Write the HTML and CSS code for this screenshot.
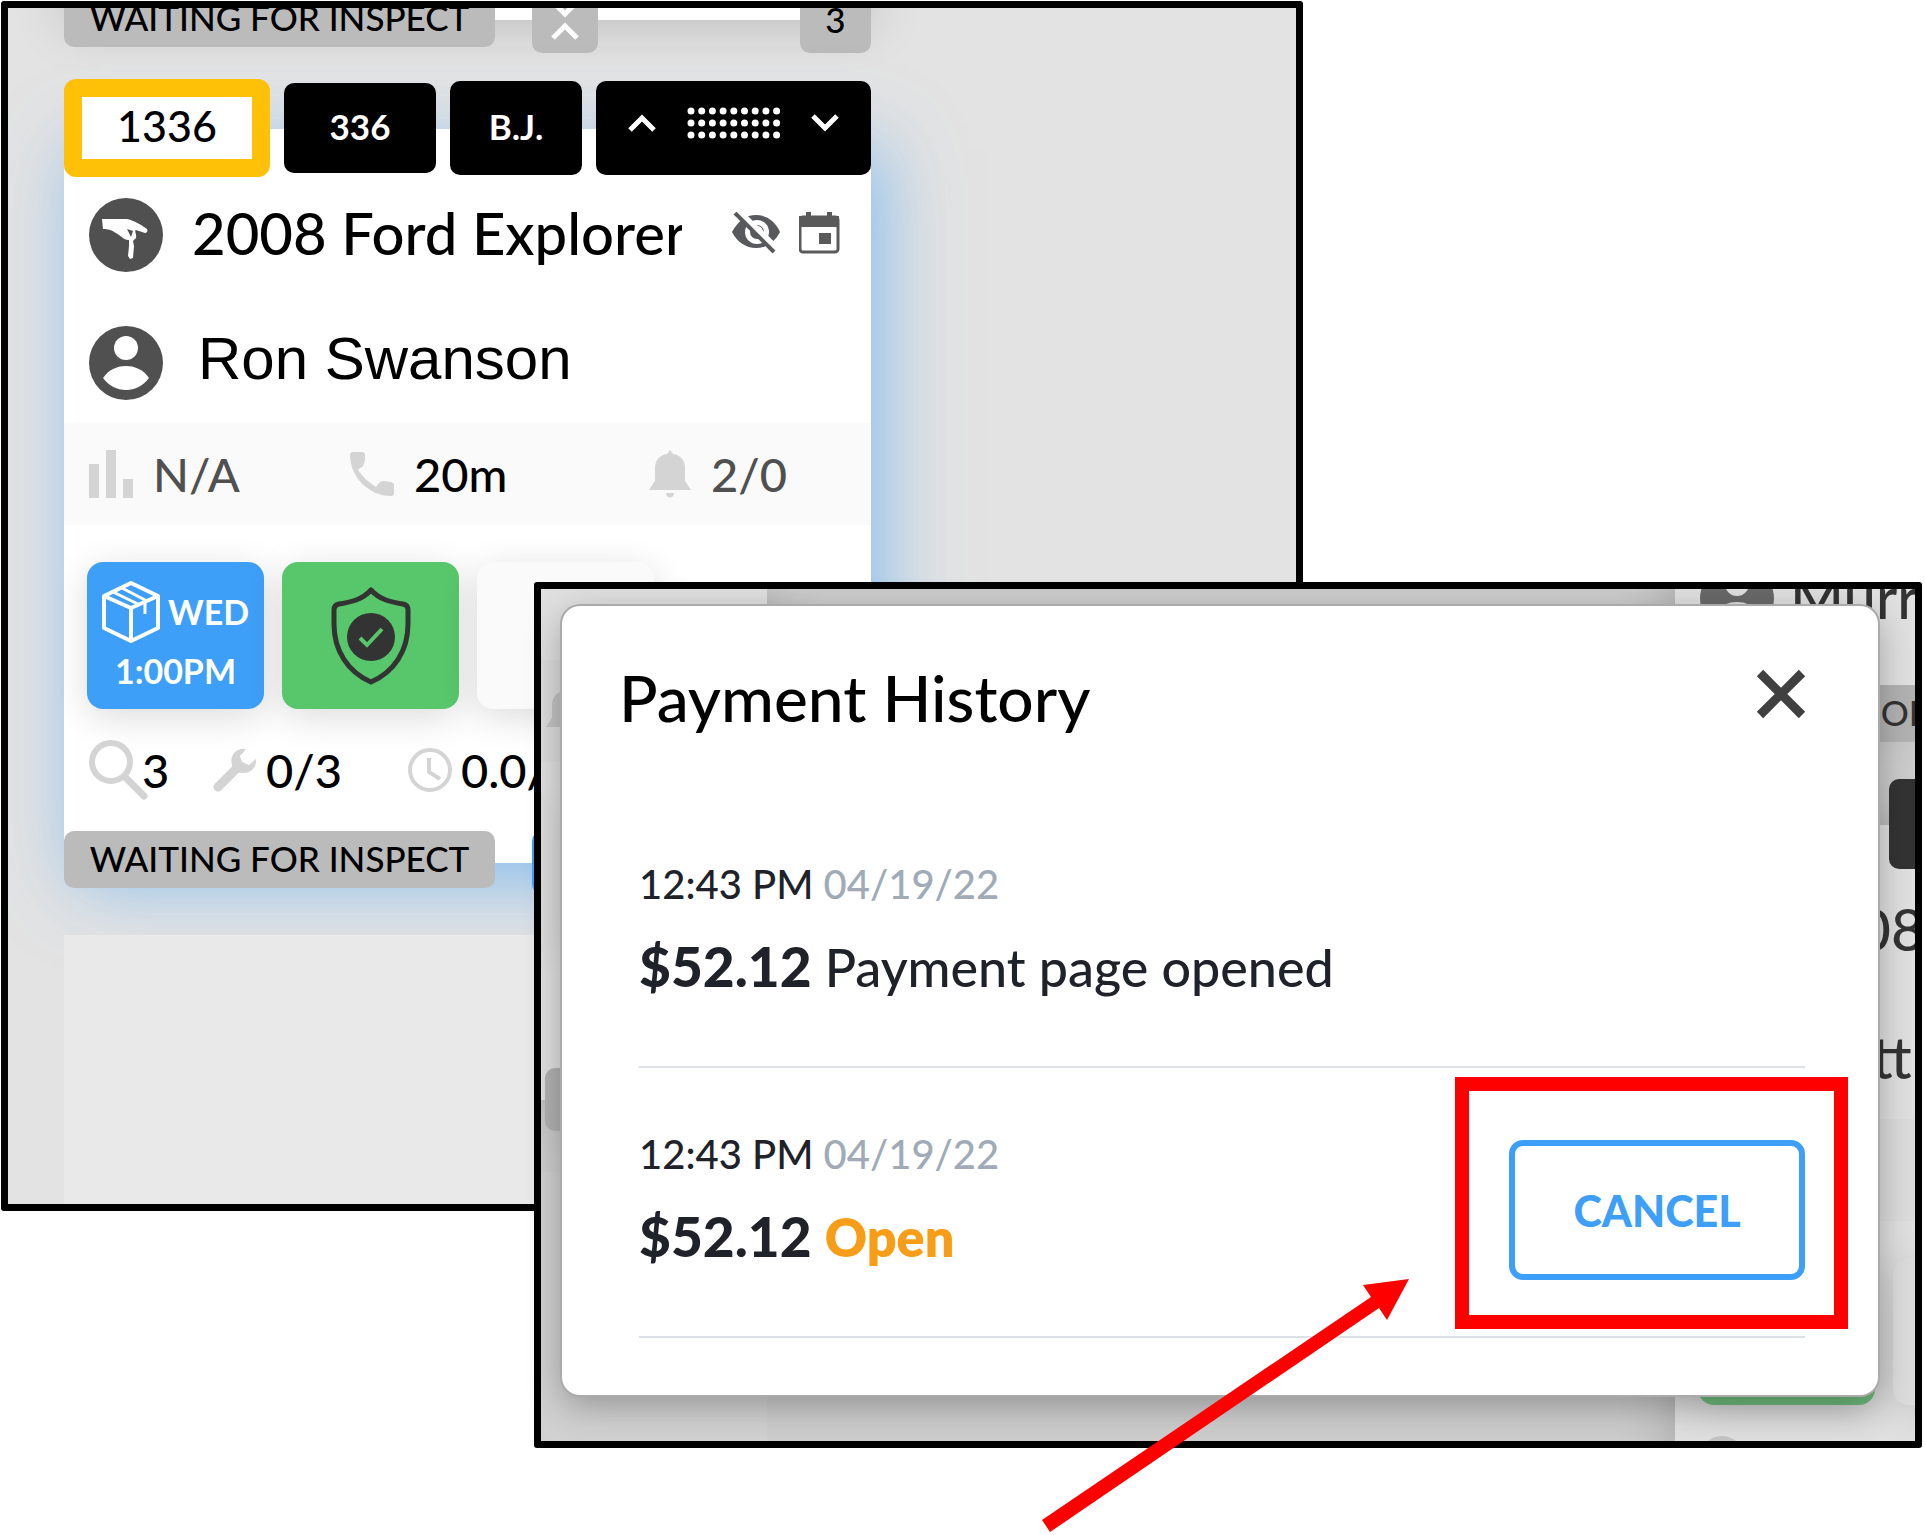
FILE: index.html
```html
<!DOCTYPE html>
<html lang="en">
<head>
    <meta charset="UTF-8">
    <meta name="viewport" content="width=device-width, initial-scale=1.0">
    <title>Payment History</title>
    <link rel="stylesheet" href="styles.css">
</head>
<body>
    <!-- shared icons -->
    <svg class="sprite" aria-hidden="true">
        <symbol id="i-user" viewBox="0 0 74 74">
            <circle cx="37" cy="37" r="37" fill="#505050"/>
            <circle cx="37" cy="22" r="12" fill="#fff"/>
            <path d="M14 52C20 43 29 40 37 40s17 3 23 12c-6 8-14 12-23 12s-17-4-23-12z" fill="#fff"/>
        </symbol>
        <symbol id="i-keys" viewBox="0 0 74 74">
            <circle cx="37" cy="37" r="37" fill="#505050"/>
            <path d="M13 21h25c8 2 13 5 20 10 1 2 0 4-2 4l-9-3c-2 0 1 6 0 8l-3 3 1 5-1 12-3 1-2-3 1-10v-6c-4 0-6-2-10-5-6-4-9-6-16-6z" fill="#fff"/>
            <path d="M38 31l4 8 2-6z" fill="#505050"/>
        </symbol>
        <symbol id="i-bell" viewBox="0 0 42 48">
            <path d="M21 0l3 4c8 1 12 7 12 14v13l6 9H0l6-9V18C6 11 10 5 18 4z" fill="#d4d4d4"/>
            <path d="M17 43h8c0 6-8 6-8 0z" fill="#d4d4d4"/>
        </symbol>
        <symbol id="i-search" viewBox="0 0 60 60">
            <circle cx="22" cy="22" r="19" fill="none" stroke="#d4d4d4" stroke-width="6"/>
            <path d="M36 37l19 19" stroke="#d4d4d4" stroke-width="7" stroke-linecap="round"/>
        </symbol>
        <symbol id="i-up" viewBox="0 0 28 18">
            <path d="M2 16L14 4l12 12" fill="none" stroke="#fff" stroke-width="5"/>
        </symbol>
        <symbol id="i-down" viewBox="0 0 28 18">
            <path d="M2 2l12 12L26 2" fill="none" stroke="#fff" stroke-width="5"/>
        </symbol>
    </svg>

    <main class="canvas">
        <section class="window board-window">
            <div class="column">
                <article class="card card-prev">
                    <div class="card-foot">
                        <span class="tag">WAITING FOR INSPECT</span>
                        <button class="chip-foot toggle" aria-label="Collapse">
                            <svg width="28" height="18"><use href="#i-down"/></svg>
                            <svg width="28" height="18"><use href="#i-up"/></svg>
                        </button>
                        <span class="chip-foot count">3</span>
                    </div>
                </article>

                <article class="card card-active">
                    <div class="card-head">
                        <span class="chip chip-order">1336</span>
                        <span class="chip chip-hat">336</span>
                        <span class="chip chip-advisor">B.J.</span>
                        <div class="chip chip-move">
                            <button class="move" aria-label="Move up"><svg width="28" height="18"><use href="#i-up"/></svg></button>
                            <svg width="94" height="32" viewBox="0 0 94 32">
                                <g fill="none" stroke="#fff" stroke-width="7" stroke-linecap="round" stroke-dasharray="0 10.7">
                                    <path d="M4 4h87"/><path d="M4 16h87"/><path d="M4 28h87"/>
                                </g>
                            </svg>
                            <button class="move" aria-label="Move down"><svg width="28" height="18"><use href="#i-down"/></svg></button>
                        </div>
                    </div>
                    <div class="line">
                        <svg class="avatar"><use href="#i-keys"/></svg>
                        <span class="vehicle">2008 Ford Explorer</span>
                        <span class="line-icons">
                            <svg width="50" height="42" viewBox="0 0 50 42">
                                <path d="M1 20C7 9 15 3 25 3s19 6 24 17c-5 10-14 16-24 16S6 30 1 20z" fill="#58595d"/>
                                <circle cx="26" cy="20" r="12" fill="#fff"/>
                                <circle cx="26" cy="20" r="7" fill="#58595d"/>
                                <path d="M25 14a6 6 0 0 1 7 6z" fill="#fff"/>
                                <path d="M7 0l40 39" stroke="#fff" stroke-width="8"/>
                                <path d="M4 1l39 39" stroke="#58595d" stroke-width="4"/>
                            </svg>
                            <svg width="41" height="42" viewBox="0 0 41 42">
                                <rect x="1" y="5" width="38" height="35" rx="3" fill="none" stroke="#5a5a5a" stroke-width="3"/>
                                <path d="M0 4h40v11H0zM7 0h5v6H7zM28 0h5v6h-5zM20 21h12v11H20z" fill="#5a5a5a"/>
                            </svg>
                        </span>
                    </div>
                    <div class="line line-customer">
                        <svg class="avatar"><use href="#i-user"/></svg>
                        <span class="customer">Ron Swanson</span>
                    </div>
                    <div class="stats">
                        <span class="stat muted">
                            <svg width="44" height="48" viewBox="0 0 44 48"><path d="M0 14h10v34H0zM17 0h10v48H17zM34 29h10v19H34z" fill="#d4d4d4"/></svg>
                            N/A
                        </span>
                        <span class="stat">
                            <svg width="44" height="44" viewBox="0 0 44 44"><path d="M3 0h9q3 0 3 3c0 4 0 7-1 9q-1 3-4 4l-2 2c4 6 10 12 18 17l3-4q2-2 5-2l7 1q3 1 3 3v8q0 3-3 3C19 44 0 25 0 3q0-3 3-3z" fill="#d4d4d4"/></svg>
                            20m
                        </span>
                        <span class="stat muted">
                            <svg width="42" height="48"><use href="#i-bell"/></svg>
                            2/0
                        </span>
                    </div>
                    <div class="tiles">
                        <div class="tile tile-blue">
                            <span class="tile-row">
                                <svg width="58" height="62" viewBox="0 0 58 62" fill="none" stroke="#fff" stroke-width="4" stroke-linejoin="round">
                                    <path d="M29 2l27 13v32L29 60 2 47V15zM2 15l27 12 27-12M29 27v33"/>
                                    <path d="M11 11l27 13M20 7l23 12v14" stroke-width="3"/>
                                </svg>
                                WED
                            </span>
                            <span>1:00PM</span>
                        </div>
                        <div class="tile tile-green">
                            <svg width="82" height="98" viewBox="0 0 82 98">
                                <path d="M41 3c9 10 20 12 32 14q5 1 5 6v14c0 27-14 48-37 58C18 85 4 64 4 37V23q0-5 5-6c12-2 23-4 32-14z" fill="none" stroke="#333" stroke-width="5" stroke-linejoin="round"/>
                                <circle cx="41" cy="50" r="24" fill="#333"/>
                                <path d="M30 51l7 7 15-16" fill="none" stroke="#58c66a" stroke-width="4"/>
                            </svg>
                        </div>
                        <div class="tile"></div>
                    </div>
                    <div class="metrics">
                        <span class="metric metric-search"><svg width="60" height="60"><use href="#i-search"/></svg>3</span>
                        <span class="metric metric-repair">
                            <svg width="44" height="44" viewBox="0 0 44 44">
                                <path d="M5 39L24 20" stroke="#d4d4d4" stroke-width="9" stroke-linecap="round"/>
                                <path d="M33 1c-9-2-17 6-14 16 1 5 5 8 10 8 8 1 15-5 14-14l-7 6-7-3-2-6z" fill="#d4d4d4"/>
                            </svg>
                            0/3
                        </span>
                        <span class="metric metric-time">
                            <svg width="44" height="46" viewBox="0 0 44 46" fill="none" stroke="#d4d4d4" stroke-width="4">
                                <circle cx="22" cy="23" r="20"/><path d="M21 11v14l11 7"/>
                            </svg>
                            0.0/
                        </span>
                    </div>
                    <div class="card-foot">
                        <span class="tag">WAITING FOR INSPECT</span>
                        <span class="chip-foot toggle toggle-blue"></span>
                    </div>
                </article>
                <div class="slot"></div>
            </div>
        </section>

        <section class="window modal-window">
            <!-- dimmed board behind the dialog -->
            <div class="backdrop" aria-hidden="true">
                <div class="column column-left">
                    <article class="card">
                        <div class="stats"><svg width="42" height="48"><use href="#i-bell"/></svg></div>
                        <div class="tiles"><div class="tile"></div></div>
                        <div class="card-foot"><span class="chip-foot"></span></div>
                    </article>
                    <div class="slot"></div>
                </div>
                <div class="column column-right">
                    <article class="card card-murray">
                        <div class="line">
                            <svg class="avatar"><use href="#i-user"/></svg>
                            <span class="vehicle">Murray</span>
                        </div>
                        <div class="card-foot"><span class="tag">WAITING FOR INSPECT</span></div>
                    </article>
                    <article class="card">
                        <div class="card-head"><span class="chip chip-wide"></span><span class="chip chip-hat"></span></div>
                        <div class="line">
                            <svg class="avatar"><use href="#i-keys"/></svg>
                            <span class="vehicle">2008</span>
                        </div>
                        <div class="line line-customer">
                            <svg class="avatar"><use href="#i-user"/></svg>
                            <span class="vehicle">Matthew</span>
                        </div>
                        <div class="stats"></div>
                        <div class="tiles">
                            <div class="tile tile-green"></div>
                            <div class="tile"></div>
                        </div>
                        <div class="metrics"><svg width="60" height="60"><use href="#i-search"/></svg></div>
                    </article>
                </div>
            </div>

            <div class="modal" role="dialog" aria-labelledby="modal-title">
                <header class="modal-head">
                    <h1 id="modal-title">Payment History</h1>
                    <button class="close" aria-label="Close">
                        <svg width="50" height="50" viewBox="0 0 50 50"><path d="M4 4l42 42M46 4L4 46" stroke="#404040" stroke-width="9"/></svg>
                    </button>
                </header>
                <ul class="payments">
                    <li class="payment">
                        <div class="payment-info">
                            <p class="when">12:43 PM <span class="date">04/19/22</span></p>
                            <p class="what"><strong>$52.12</strong> Payment page opened</p>
                        </div>
                    </li>
                    <li class="payment">
                        <div class="payment-info">
                            <p class="when">12:43 PM <span class="date">04/19/22</span></p>
                            <p class="what"><strong>$52.12</strong> <span class="open">Open</span></p>
                        </div>
                        <div class="highlight"><button class="cancel">CANCEL</button></div>
                    </li>
                </ul>
            </div>

            <svg class="arrow" width="368" height="254" viewBox="0 0 368 254" aria-hidden="true">
                <path d="M0 241L329 18 321 6 367 0 345 41 337 29 8 253z" fill="#f00"/>
            </svg>
        </section>
    </main>
</body>
</html>
```
FILE: styles.css
```css
* {
    box-sizing: border-box;
}
body {
    margin: 0;
    background: #fff;
    color: #000;
    font-family: Lato, "Open Sans", sans-serif;
    font-weight: 500;
}
h1, p, ul {
    margin: 0;
    padding: 0;
}
button {
    font: inherit;
    padding: 0;
    border: none;
    background: none;
    cursor: pointer;
}
svg {
    display: block;
    flex: none;
}
.sprite {
    position: absolute;
    width: 0;
    height: 0;
}
.canvas {
    position: relative;
    min-height: 1535px;
    padding: 1px;
    overflow: hidden;
}

/* two overlapping windows */
.window {
    border: 7px solid #000;
    border-radius: 3px;
    background: #e3e3e3;
}
.board-window {
    width: 67.7%;
    padding: 0 56px;
    overflow: hidden;
}
.modal-window {
    position: absolute;
    top: 582px;
    left: 28%;
    right: 3px;
    margin-left: -5px;
}

/* board column */
.column {
    display: flex;
    flex-direction: column;
    max-width: 807px;
}
.card {
    display: flex;
    flex-direction: column;
    background: #fff;
    box-shadow: 0 0 50px rgba(0, 0, 0, 0.25);
}
.card-active {
    margin-top: 109px;
    box-shadow: 12px 20px 70px rgba(62, 159, 248, 0.55);
}
.card-prev {
    margin-top: -18px;
}
.card-head {
    display: flex;
    align-items: center;
    gap: 14px;
    height: 98px;
    margin-top: -50px;
}
.chip {
    display: flex;
    flex: none;
    align-items: center;
    justify-content: center;
    height: 94px;
    border-radius: 10px;
    background: #000;
    color: #fff;
    font-size: 35px;
    font-weight: 700;
    line-height: 40px;
    padding-bottom: 4px;
}
.chip-order {
    width: 206px;
    height: 98px;
    border: 18px solid #ffc107;
    border-radius: 12px;
    background: #fff;
    color: #000;
    font-size: 43px;
    font-weight: 500;
}
.chip-hat {
    width: 152px;
    height: 90px;
}
.chip-advisor {
    width: 132px;
}
.chip-move {
    flex: 1;
    justify-content: space-between;
    padding: 0 32px 10px;
}
.chip-wide {
    width: 200px;
}
.line {
    display: flex;
    align-items: center;
    gap: 29px;
    height: 74px;
    margin-top: 21px;
    padding: 0 31px 0 25px;
}
.line-customer {
    margin-top: 54px;
}
.avatar {
    width: 74px;
    height: 74px;
}
.vehicle {
    width: 490px;
    overflow: hidden;
    white-space: nowrap;
    font-size: 58px;
    line-height: 70px;
    padding-bottom: 4px;
}
.customer {
    padding: 0 0 8px 6px;
    font-family: "Liberation Sans", Arial, sans-serif;
    font-weight: 400;
    font-size: 60px;
    line-height: 66px;
}
.line-icons {
    display: flex;
    gap: 18px;
    margin-left: auto;
    padding-bottom: 5px;
}
.stats {
    display: grid;
    grid-template-columns: 261px 299px 1fr;
    align-items: center;
    height: 102px;
    margin-top: 23px;
    padding-left: 25px;
    background: #fafafa;
}
.stat {
    display: flex;
    align-items: center;
    gap: 20px;
    font-size: 47px;
    line-height: 58px;
}
.muted {
    color: #505050;
}
.tiles {
    display: flex;
    gap: 18px;
    margin-top: 37px;
    padding: 0 23px;
}
.tile {
    display: flex;
    flex-direction: column;
    align-items: center;
    justify-content: center;
    gap: 8px;
    width: 177px;
    height: 147px;
    border-radius: 16px;
    background: #fafafa;
    box-shadow: 0 8px 36px rgba(0, 0, 0, 0.14);
    color: #fff;
    font-size: 34px;
    font-weight: 700;
    line-height: 40px;
}
.tile-blue {
    background: #3e9ff8;
}
.tile-green {
    background: #58c66a;
}
.tile-row {
    display: flex;
    align-items: center;
    gap: 8px;
}
.metrics {
    display: flex;
    align-items: center;
    height: 60px;
    margin-top: 31px;
    padding-left: 25px;
    font-size: 47px;
    line-height: 60px;
}
.metric {
    display: flex;
    align-items: center;
    gap: 9px;
}
.metric-search {
    gap: 0;
    width: 124px;
}
.metric-search svg {
    margin-right: -7px;
}
.metric-repair {
    width: 195px;
}
.card-foot {
    display: flex;
    align-items: flex-start;
    height: 65px;
    margin-top: 31px;
    margin-bottom: -33px;
}
.card-prev .card-foot {
    margin-top: 0;
    margin-bottom: -35px;
}
.tag {
    flex: none;
    width: 431px;
    height: 57px;
    border-radius: 10px;
    background: #bbb;
    font-size: 35px;
    line-height: 55px;
    text-align: center;
    white-space: nowrap;
}
.chip-foot {
    width: 71px;
    height: 63px;
    border-radius: 10px;
    background: #bbb;
    font-size: 35px;
    line-height: 59px;
    text-align: center;
}
.toggle {
    display: flex;
    flex-direction: column;
    align-items: center;
    justify-content: flex-end;
    gap: 4px;
    width: 66px;
    margin-left: 37px;
    padding-bottom: 13px;
}
.toggle-blue {
    background: #3e9ff8;
}
.count {
    margin-left: auto;
}
.slot {
    height: 269px;
    margin-top: 72px;
    background: #e9e9e9;
}

/* board behind the dialog */
.backdrop {
    position: absolute;
    inset: 0;
    display: flex;
    justify-content: space-between;
    overflow: hidden;
}
.backdrop::after {
    content: "";
    position: absolute;
    inset: 0;
    background: rgba(160, 160, 160, 0.32);
}
.column-left {
    width: 226px;
}
.column-left .stats {
    margin-top: 71px;
    padding-left: 5px;
}
.column-left .tiles {
    padding: 0;
}
.column-left .tile {
    width: 11px;
    border-radius: 0 16px 16px 0;
}
.column-left .card-foot {
    margin-top: 122px;
    padding-left: 4px;
}
.column-right {
    width: 240px;
}
.column-right .card {
    margin-bottom: 108px;
}
.column-right .line {
    gap: 16px;
}
.column-right .vehicle,
.column-right .tile {
    flex: none;
}
.column-right .card-murray {
    margin-top: -48px;
}
.card-murray .card-foot {
    margin-top: 49px;
}

/* dialog */
.modal {
    position: relative;
    margin: 17px 37px 46px 21px;
    padding: 0 73px 57px 77px;
    border-radius: 18px;
    background: #fff;
    box-shadow: 0 0 0 2px #aaa, 0 10px 36px rgba(0, 0, 0, 0.3);
}
.modal-head {
    display: flex;
    align-items: flex-start;
    justify-content: space-between;
    height: 192px;
    margin: 0 -12px 0 -20px;
    padding-top: 52px;
}
.modal-head h1 {
    font-size: 64px;
    font-weight: 500;
    line-height: 80px;
}
.close {
    display: flex;
    align-items: center;
    justify-content: center;
    width: 72px;
    height: 72px;
}
.payments {
    list-style: none;
}
.payment {
    display: flex;
    align-items: center;
    justify-content: space-between;
    height: 270px;
    padding-top: 16px;
    border-bottom: 2px solid #dde1e5;
    color: #20222a;
}
.payment-info {
    padding-bottom: 18px;
}
.when {
    margin-bottom: 20px;
    font-size: 40px;
    line-height: 50px;
}
.date {
    color: #a0abb7;
}
.what {
    font-size: 52px;
    line-height: 74px;
}
.what strong {
    font-size: 55px;
    font-weight: 900;
}
.open {
    color: #f89d17;
    font-weight: 800;
}
.cancel {
    width: 296px;
    height: 140px;
    border: 6px solid #3e9ff8;
    border-radius: 14px;
    background: #fff;
    color: #3e9ff8;
    font-size: 43px;
    font-weight: 900;
}

/* call-out marks */
.highlight {
    position: relative;
}
.highlight::after {
    content: "";
    position: absolute;
    inset: -63px -43px -49px -54px;
    border: 14px solid #f00;
    pointer-events: none;
}
.arrow {
    position: absolute;
    right: 505px;
    bottom: -92px;
}
```
